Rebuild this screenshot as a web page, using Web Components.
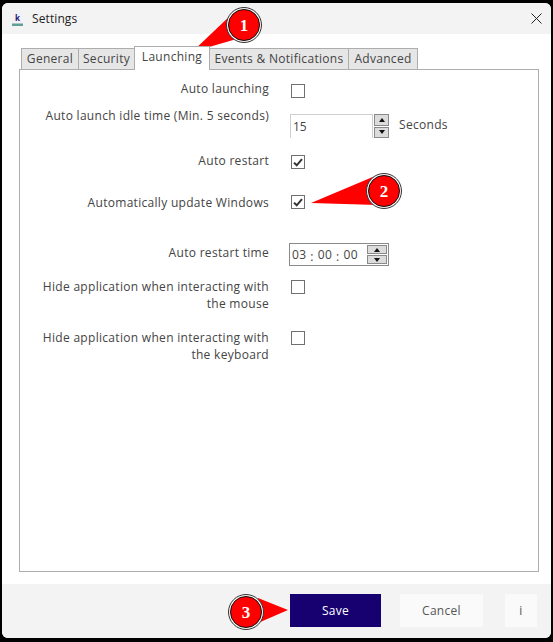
<!DOCTYPE html>
<html>
<head>
<meta charset="utf-8">
<title>Settings</title>
<style>
  html, body { margin: 0; padding: 0; background: #000; }
  body { width: 553px; height: 642px; overflow: hidden; font-family: "Open Sans", "Noto Sans", sans-serif; }
  .unit { padding-bottom: 4px; }
</style>
</head>
<body>
<settings-window>
  <tab-strip slot="tabs" active="Launching" tabs="General,Security,Launching,Events &amp; Notifications,Advanced"></tab-strip>

  <form-row top="14" height="22" nudge="-4"><span slot="label">Auto launching</span><check-box></check-box></form-row>
  <form-row top="8" height="24" nudge="-7">
    <span slot="label">Auto launch idle time (Min. 5 seconds)</span>
    <spin-box value="15"></spin-box><span class="unit">Seconds</span>
  </form-row>
  <form-row top="17" height="14" nudge="-3"><span slot="label">Auto restart</span><check-box checked></check-box></form-row>
  <form-row top="26" height="14" nudge="-1"><span slot="label">Automatically update Windows</span><check-box checked></check-box></form-row>
  <form-row top="32" height="23" nudge="1"><span slot="label">Auto restart time</span><time-box value="03,00,00"></time-box></form-row>
  <form-row top="14" height="34" nudge="-2"><span slot="label">Hide application when interacting with the mouse</span><check-box></check-box></form-row>
  <form-row top="17" height="34" nudge="-2"><span slot="label">Hide application when interacting with the keyboard</span><check-box></check-box></form-row>

  <action-button slot="actions" kind="primary" width="91" after="19">Save</action-button>
  <action-button slot="actions" width="83" after="22">Cancel</action-button>
  <action-button slot="actions" width="32" after="0">i</action-button>
</settings-window>

<callout-marks></callout-marks>

<script>
class SettingsWindow extends HTMLElement {
  constructor() {
    super();
    this.attachShadow({ mode: 'open' });
    this.shadowRoot.innerHTML = `
      <style>
        :host {
          display: flex;
          flex-direction: column;
          box-sizing: border-box;
          position: absolute;
          left: 2px;
          top: 3px;
          width: 549px;
          height: 635px;
          background: #fff;
          border-radius: 6px;
          overflow: hidden;
          font-size: 12px;
          letter-spacing: .3px;
          color: #444;
        }
        .title {
          flex: none;
          height: 31px;
          background: #f3f3f3;
          display: flex;
          align-items: center;
          padding-left: 10px;
          gap: 9px;
          letter-spacing: .1px;
          color: #222;
        }
        .title span { flex: 1; }
        .close { margin-right: 9px; }
        .body {
          flex: 1;
          padding: 12px 12px 12px 17px;
          display: flex;
          flex-direction: column;
        }
        .panel {
          flex: 1;
          border: 1px solid #adadad;
          margin-top: -1px;
          display: flex;
          flex-direction: column;
        }
        .foot {
          flex: none;
          height: 54px;
          background: #f3f3f3;
          display: flex;
          align-items: center;
          justify-content: flex-end;
          padding: 0 14px 2px 0;
          box-sizing: border-box;
        }
      </style>
      <div class="title">
        <svg width="11" height="14" viewBox="0 0 11 14">
          <rect width="11" height="11" fill="#f1f1f7"/>
          <rect y="11.5" width="11" height="2.5" fill="#5f9f95"/>
          <text x="5.5" y="8.5" font-size="8" font-weight="700" font-family="Open Sans" fill="#1f1570" text-anchor="middle">k</text>
        </svg>
        <span>Settings</span>
        <svg class="close" width="11" height="11" viewBox="0 0 11 11">
          <path d="M.5.5l10 10M10.5.5l-10 10" stroke="#222" stroke-width="1" fill="none"/>
        </svg>
      </div>
      <div class="body">
        <slot name="tabs"></slot>
        <div class="panel"><slot></slot></div>
      </div>
      <div class="foot"><slot name="actions"></slot></div>
    `;
  }
}

class TabStrip extends HTMLElement {
  constructor() {
    super();
    this.attachShadow({ mode: 'open' });
  }

  connectedCallback() {
    const active = this.getAttribute('active');
    const widths = { 'General': 57, 'Security': 56, 'Launching': 75, 'Events & Notifications': 139, 'Advanced': 69 };
    const tabs = this.getAttribute('tabs').split(',');
    this.shadowRoot.innerHTML = `
      <style>
        :host { display: flex; align-items: flex-end; height: 24px; padding-left: 3px; position: relative; z-index: 1; }
        .tab {
          box-sizing: border-box;
          height: 22px;
          border: 1px solid #adadad;
          margin-left: -1px;
          background: #e6e6e6;
          display: flex;
          align-items: center;
          justify-content: center;
          white-space: nowrap;
          padding-bottom: 1px;
        }
        .tab.on {
          height: 24px;
          background: #fff;
          border-bottom: 0;
          padding-bottom: 4px;
        }
      </style>
      ${tabs.map(t => `<div class="tab ${t === active ? 'on' : ''}" style="width:${widths[t] + 1}px">${t.replace('&', '&amp;')}</div>`).join('')}
    `;
  }
}

class FormRow extends HTMLElement {
  constructor() {
    super();
    this.attachShadow({ mode: 'open' });
  }

  connectedCallback() {
    const top = this.getAttribute('top');
    const height = this.getAttribute('height');
    const nudge = this.getAttribute('nudge') || 0;
    this.shadowRoot.innerHTML = `
      <style>
        :host {
          display: grid;
          grid-template-columns: 236px auto;
          column-gap: 21px;
          align-items: start;
          padding-left: 13px;
          margin-top: ${top}px;
          min-height: ${height}px;
        }
        .label { text-align: right; line-height: 17px; margin-top: ${nudge}px; }
        .control { display: flex; align-items: center; gap: 10px; }
      </style>
      <div class="label"><slot name="label"></slot></div>
      <div class="control"><slot></slot></div>
    `;
  }
}

class CheckBox extends HTMLElement {
  constructor() {
    super();
    this.attachShadow({ mode: 'open' });
  }

  connectedCallback() {
    const mark = this.hasAttribute('checked')
      ? '<svg width="10" height="9" viewBox="0 0 10 9"><path d="M1 4.6l2.7 2.7L9 1.2" fill="none" stroke="#333" stroke-width="2"/></svg>'
      : '';
    this.shadowRoot.innerHTML = `
      <style>
        :host {
          display: flex;
          align-items: center;
          justify-content: center;
          box-sizing: border-box;
          width: 14px;
          height: 14px;
          margin-left: 1px;
          border: 1px solid #707070;
          background: #fff;
        }
      </style>
      ${mark}
    `;
  }
}

class SpinArrows extends HTMLElement {
  constructor() {
    super();
    this.attachShadow({ mode: 'open' });
    this.shadowRoot.innerHTML = `
      <style>
        :host { display: flex; flex-direction: column; gap: 1px; width: 15px; }
        div {
          flex: 1;
          box-sizing: border-box;
          border: 1px solid #8a8a8a;
          background: #dcdcdc;
          display: flex;
          align-items: center;
          justify-content: center;
        }
        i { width: 0; height: 0; border: 3.5px solid transparent; }
        .up i { border-bottom: 4px solid #111; border-top: 0; }
        .down i { border-top: 4px solid #111; border-bottom: 0; }
      </style>
      <div class="up"><i></i></div>
      <div class="down"><i></i></div>
    `;
  }
}

class SpinBox extends HTMLElement {
  constructor() {
    super();
    this.attachShadow({ mode: 'open' });
  }

  connectedCallback() {
    this.shadowRoot.innerHTML = `
      <style>
        :host { display: flex; gap: 1px; height: 24px; }
        .field {
          box-sizing: border-box;
          width: 83px;
          border: 1px solid #d0d0d0;
          border-bottom: 0;
          padding: 3px 0 0 2px;
          line-height: 17px;
          letter-spacing: 0;
        }
      </style>
      <div class="field">${this.getAttribute('value')}</div>
      <spin-arrows></spin-arrows>
    `;
  }
}

class TimeBox extends HTMLElement {
  constructor() {
    super();
    this.attachShadow({ mode: 'open' });
  }

  connectedCallback() {
    const parts = this.getAttribute('value').split(',');
    this.shadowRoot.innerHTML = `
      <style>
        :host {
          display: flex;
          box-sizing: border-box;
          align-items: center;
          height: 23px;
          width: 100px;
          margin-left: -1px;
          border: 1px solid #8a8a8a;
          padding: 1px 1px 1px 2px;
        }
        .parts { flex: 1; display: flex; gap: 4px; }
        .parts b { font-weight: 400; position: relative; top: 2px; }
        spin-arrows { width: 20px; height: 19px; }
      </style>
      <div class="parts">${parts.map(p => `<span>${p}</span>`).join('<b>:</b>')}</div>
      <spin-arrows></spin-arrows>
    `;
  }
}

class ActionButton extends HTMLElement {
  constructor() {
    super();
    this.attachShadow({ mode: 'open' });
  }

  connectedCallback() {
    const primary = this.getAttribute('kind') === 'primary';
    this.shadowRoot.innerHTML = `
      <style>
        :host {
          display: flex;
          align-items: center;
          justify-content: center;
          box-sizing: border-box;
          width: ${this.getAttribute('width')}px;
          height: 33px;
          margin-right: ${this.getAttribute('after')}px;
          background: ${primary ? '#170070' : '#fafafa'};
          color: ${primary ? '#fff' : '#555'};
        }
      </style>
      <slot></slot>
    `;
  }
}

// the red numbered arrows drawn over the screenshot
class CalloutMarks extends HTMLElement {
  constructor() {
    super();
    this.attachShadow({ mode: 'open' });
    const badge = (cx, cy, n) => `
      <circle cx="${cx}" cy="${cy}" r="17.5" fill="#f4f4f4" stroke="#333" stroke-width="1"/>
      <circle cx="${cx}" cy="${cy}" r="15.5" fill="#f00" stroke="#111" stroke-width="1"/>
      <text x="${cx}" y="${cy + 6}" text-anchor="middle" font-family="Liberation Serif" font-weight="700" font-size="17" fill="#fff">${n}</text>
    `;
    this.shadowRoot.innerHTML = `
      <style>
        :host { position: absolute; left: 0; top: 0; width: 553px; height: 642px; pointer-events: none; }
      </style>
      <svg width="553" height="642" viewBox="0 0 553 642">
        <polygon points="192,52 232,14 240,38" fill="#f00"/>
        <polygon points="311,203 375,176 378,205" fill="#f00"/>
        <polygon points="288,610 258,598 258,623" fill="#f00"/>
        ${badge(244, 25, 1)}
        ${badge(384, 191, 2)}
        ${badge(246, 612, 3)}
      </svg>
    `;
  }
}

customElements.define('settings-window', SettingsWindow);
customElements.define('tab-strip', TabStrip);
customElements.define('form-row', FormRow);
customElements.define('check-box', CheckBox);
customElements.define('spin-arrows', SpinArrows);
customElements.define('spin-box', SpinBox);
customElements.define('time-box', TimeBox);
customElements.define('action-button', ActionButton);
customElements.define('callout-marks', CalloutMarks);
</script>
</body>
</html>
